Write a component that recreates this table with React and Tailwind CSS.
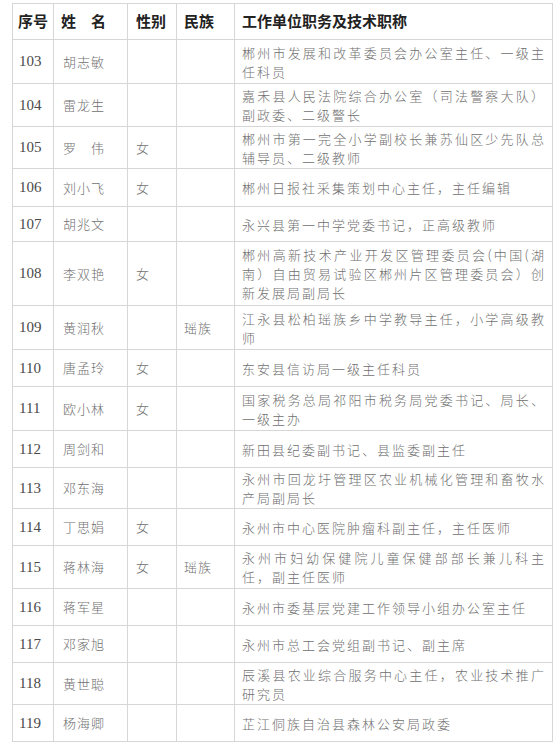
import React from "react";

const cjk = "font-['Noto_Sans_CJK_SC',sans-serif]";

const rows = [
  { no: "103", name: "胡志敏", h: "h-[44px]", work: ["郴州市发展和改革委员会办公室主任、一级主", "任科员"] },
  { no: "104", name: "雷龙生", h: "h-[43px]", work: ["嘉禾县人民法院综合办公室（司法警察大队）", "副政委、二级警长"] },
  { no: "105", name: "罗　伟", sex: "女", h: "h-[42px]", work: ["郴州市第一完全小学副校长兼苏仙区少先队总", "辅导员、二级教师"] },
  { no: "106", name: "刘小飞", sex: "女", h: "h-[38px]", work: ["郴州日报社采集策划中心主任，主任编辑"] },
  { no: "107", name: "胡兆文", h: "h-[35px]", work: ["永兴县第一中学党委书记，正高级教师"] },
  {
    no: "108",
    name: "李双艳",
    sex: "女",
    h: "h-[64px]",
    work: ["郴州高新技术产业开发区管理委员会(中国(湖", "南）自由贸易试验区郴州片区管理委员会）创", "新发展局副局长"],
  },
  { no: "109", name: "黄润秋", nation: "瑶族", h: "h-[44px]", work: ["江永县松柏瑶族乡中学教导主任，小学高级教", "师"] },
  { no: "110", name: "唐孟玲", sex: "女", h: "h-[37px]", work: ["东安县信访局一级主任科员"] },
  { no: "111", name: "欧小林", sex: "女", h: "h-[44px]", work: ["国家税务总局祁阳市税务局党委书记、局长、", "一级主办"] },
  { no: "112", name: "周剑和", h: "h-[37px]", work: ["新田县纪委副书记、县监委副主任"] },
  { no: "113", name: "邓东海", h: "h-[41px]", work: ["永州市回龙圩管理区农业机械化管理和畜牧水", "产局副局长"] },
  { no: "114", name: "丁思娟", sex: "女", h: "h-[37px]", work: ["永州市中心医院肿瘤科副主任，主任医师"] },
  { no: "115", name: "蒋林海", sex: "女", nation: "瑶族", h: "h-[43px]", work: ["永州市妇幼保健院儿童保健部部长兼儿科主", "任，副主任医师"] },
  { no: "116", name: "蒋军星", h: "h-[37px]", work: ["永州市委基层党建工作领导小组办公室主任"] },
  { no: "117", name: "邓家旭", h: "h-[37px]", work: ["永州市总工会党组副书记、副主席"] },
  { no: "118", name: "黄世聪", h: "h-[42px]", work: ["辰溪县农业综合服务中心主任，农业技术推广", "研究员"] },
  { no: "119", name: "杨海卿", h: "h-[37px]", work: ["芷江侗族自治县森林公安局政委"] },
];

const cell = "border border-[#d6d6d6] align-middle p-0";

export default function App() {
  return (
    <div className="bg-white w-[560px] h-[750px] pt-[3px] pl-[12px]">
      <table className="table-fixed border-collapse w-[540px]">
        <colgroup>
          <col className="w-[41px]" />
          <col className="w-[74px]" />
          <col className="w-[49px]" />
          <col className="w-[58px]" />
          <col className="w-[318px]" />
        </colgroup>
        <thead>
          <tr className={`h-[36px] text-[15px] font-bold text-[#222] ${cjk}`}>
            <th className={`${cell} text-left pl-[5px]`}>序号</th>
            <th className={`${cell} text-left pl-[7px]`}>姓　名</th>
            <th className={`${cell} text-left pl-[8px]`}>性别</th>
            <th className={`${cell} text-left pl-[7px]`}>民族</th>
            <th className={`${cell} text-left pl-[7px]`}>工作单位职务及技术职称</th>
          </tr>
        </thead>
        <tbody className="font-light">
          {rows.map((r) => (
            <tr key={r.no} className={r.h}>
              <td className={`${cell} pl-[6px] text-[15px] text-[#4a4a4a] font-['Liberation_Serif',serif]`}>{r.no}</td>
              <td className={`${cell} pl-[9px] text-[13px] tracking-[1px] text-[#707070] ${cjk}`}>{r.name}</td>
              <td className={`${cell} pl-[8px] text-[13px] text-[#707070] ${cjk}`}>{r.sex}</td>
              <td className={`${cell} pl-[7px] text-[13px] tracking-[1px] text-[#707070] ${cjk}`}>{r.nation}</td>
              <td className={`${cell} pl-[7px] pr-[6px] text-[13px] tracking-[2px] leading-[19px] text-[#707070] ${cjk}`}>
                {r.work.map((line, i) => (
                  <div
                    key={i}
                    className={`whitespace-nowrap ${i < r.work.length - 1 ? "[text-align-last:justify]" : ""}`}
                  >
                    {line}
                  </div>
                ))}
              </td>
            </tr>
          ))}
        </tbody>
      </table>
    </div>
  );
}
